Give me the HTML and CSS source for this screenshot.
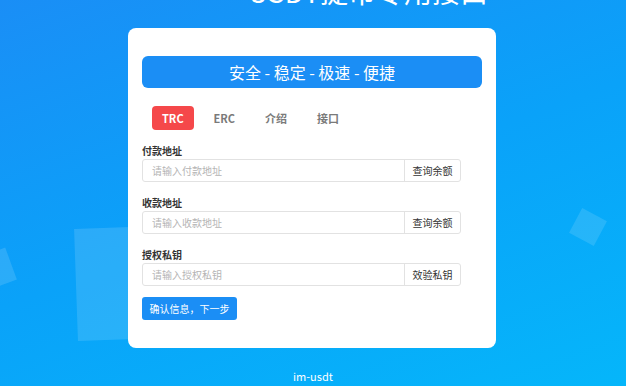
FILE: index.html
```html
<!DOCTYPE html>
<html lang="zh">
<head>
<meta charset="utf-8">
<link rel="stylesheet" href="styles.css">
</head>
<body>
<div class="bg">
  <div class="deco deco-a"></div>
  <div class="deco deco-b"></div>
  <div class="deco deco-c"></div>
  <h1 class="title">USDT提币专用接口</h1>
  <div class="card">
    <div class="banner">安全 - 稳定 - 极速 - 便捷</div>
    <div class="tabs">
      <span class="tab active">TRC</span>
      <span class="tab">ERC</span>
      <span class="tab">介绍</span>
      <span class="tab">接口</span>
    </div>
    <div class="form">
      <div class="field">
        <div class="label">付款地址</div>
        <div class="group">
          <input class="input" placeholder="请输入付款地址">
          <span class="addon">查询余额</span>
        </div>
      </div>
      <div class="field">
        <div class="label">收款地址</div>
        <div class="group">
          <input class="input" placeholder="请输入收款地址">
          <span class="addon">查询余额</span>
        </div>
      </div>
      <div class="field">
        <div class="label">授权私钥</div>
        <div class="group">
          <input class="input" placeholder="请输入授权私钥">
          <span class="addon">效验私钥</span>
        </div>
      </div>
      <button class="submit">确认信息，下一步</button>
    </div>
  </div>
  <div class="footer">im-usdt</div>
</div>
</body>
</html>
```
FILE: styles.css
```css
* { box-sizing: border-box; }
html, body { margin: 0; padding: 0; }
body {
  font-family: "Noto Sans CJK SC", "Noto Sans", "Liberation Sans", sans-serif;
  overflow: hidden;
}
.bg {
  position: relative;
  width: 626px;
  height: 386px;
  overflow: hidden;
  background: linear-gradient(160deg, #1a8ef6 0%, #0aa2f9 50%, #05b6fa 100%);
  display: flex;
  flex-direction: column;
  align-items: center;
}
.deco {
  position: absolute;
  background: rgba(255,255,255,0.13);
}
.deco-a { left: 76px; top: 228px; width: 56px; height: 112px; transform: rotate(-2deg); }
.deco-b { left: -20px; top: 252px; width: 32px; height: 34px; transform: rotate(-20deg); }
.deco-c { left: 574px; top: 213px; width: 28px; height: 28px; transform: rotate(28deg); background: rgba(255,255,255,0.12); }
.title {
  position: relative;
  margin: -26px 0 0 110px;
  font-size: 28px;
  line-height: 34px;
  font-weight: 400;
  color: #fff;
  height: 34px;
  white-space: nowrap;
}
.card {
  position: relative;
  margin: 20px 2px 0 0;
  width: 368px;
  background: #fff;
  border-radius: 8px;
  padding: 28px 14px 28px;
}
.banner {
  height: 32px;
  border-radius: 6px;
  background: #1b8ef5;
  color: #fff;
  font-size: 16px;
  line-height: 32px;
  text-align: center;
}
.tabs {
  display: flex;
  gap: 10px;
  margin: 18px 0 0 10px;
}
.tab {
  height: 24px;
  line-height: 24px;
  padding: 0 10px;
  font-size: 11px;
  font-weight: 700;
  color: #7a7a7a;
  border-radius: 4px;
}
.tab.active {
  background: #f5484a;
  color: #fff;
}
.form {
  width: 319px;
  margin-top: 14px;
}
.field { margin-bottom: 14px; }
.label {
  font-size: 10px;
  font-weight: 700;
  color: #333;
  line-height: 14px;
  margin-bottom: 1px;
}
.group {
  display: flex;
  height: 23px;
  border: 1px solid #e2e2e2;
  border-radius: 3px;
}
.input {
  flex: 1;
  min-width: 0;
  border: 0;
  outline: none;
  padding: 0 9px;
  font-family: inherit;
  font-size: 10px;
  color: #333;
  background: transparent;
}
.input::placeholder { color: #b4b4b4; }
.addon {
  width: 56px;
  border-left: 1px solid #e2e2e2;
  font-size: 10px;
  color: #333;
  line-height: 21px;
  text-align: center;
}
.submit {
  display: block;
  margin-top: -3px;
  width: 95px;
  height: 23px;
  border: 0;
  border-radius: 3px;
  background: #1b8ef5;
  color: #fff;
  font-family: inherit;
  font-size: 10px;
  padding: 0;
}
.footer {
  margin-top: 21px;
  color: #fff;
  font-size: 11px;
  line-height: 14px;
}
```
